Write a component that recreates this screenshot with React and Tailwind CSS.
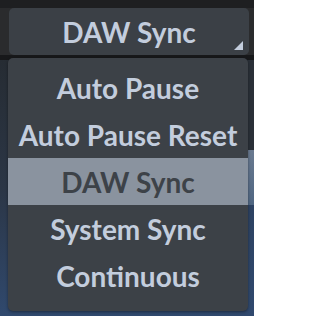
export default function App() {
  const items = ["Auto Pause", "Auto Pause Reset", "DAW Sync", "System Sync", "Continuous"];
  return (
    <div
      className="relative w-[254px] h-[316px] overflow-hidden bg-[#2a2b2d] flex flex-col"
      style={{ fontFamily: "Lato, 'Noto Sans', sans-serif" }}
    >
      <div className="h-[8px] bg-[#1e1f21]" />
      <div className="pl-[9px] pr-[5px]">
        <div className="relative h-[47px] rounded-[5px] bg-[#3b4046] flex items-center justify-center">
          <span className="text-[28px] font-bold text-[#c3cddd] leading-none">DAW Sync</span>
          <svg className="absolute right-[6px] bottom-[5px]" width="9" height="9" viewBox="0 0 9 9">
            <polygon points="9,0 9,9 0,9" fill="#c3cddd" />
          </svg>
        </div>
      </div>
      <div className="h-[5px] bg-[#17181a]" />
      <div className="flex-1 flex">
        <div className="flex-1 bg-gradient-to-b from-[#262c33] via-[#2b3646] to-[#30496e]" />
        <div className="w-[6px] flex flex-col">
          <div className="h-[90px] bg-[#2a3038]" />
          <div className="h-[55px] bg-gradient-to-b from-[#6a7a90] to-[#4f6682]" />
          <div className="flex-1 bg-gradient-to-b from-[#2d4262] to-[#30496e]" />
        </div>
      </div>
      <div className="absolute left-[8px] top-[58px] w-[240px] h-[253px] rounded-[5px] bg-[#3c4147] pt-[6px] shadow-[0_1px_3px_rgba(0,0,0,0.4)] flex flex-col">
        {items.map((t) => (
          <div
            key={t}
            className={
              "h-[47px] flex items-center justify-center text-[28px] font-bold leading-none " +
              (t === "DAW Sync" ? "bg-[#8a939f] text-[#3d4248]" : "text-[#c3cddd]")
            }
          >
            {t}
          </div>
        ))}
      </div>
    </div>
  );
}
